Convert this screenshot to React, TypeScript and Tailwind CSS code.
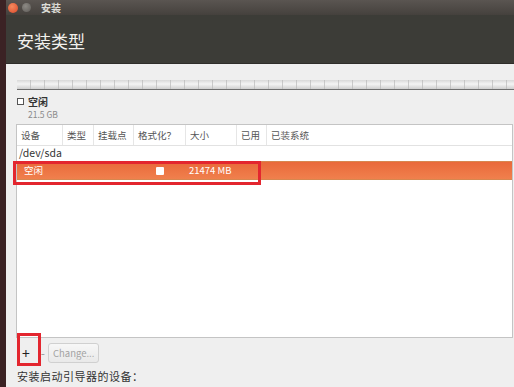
import React from 'react'

const font = { fontFamily: '"Noto Sans CJK SC", "Noto Sans", sans-serif' }

const columns = [
  { label: '设备', w: 'w-[46px]' },
  { label: '类型', w: 'w-[31px]' },
  { label: '挂载点', w: 'w-[40px]' },
  { label: '格式化？', w: 'w-[52px]' },
  { label: '大小', w: 'w-[51px]' },
  { label: '已用', w: 'w-[30px]' },
  { label: '已装系统', w: 'flex-1' },
]

const PartitionBar = () => (
  <div className="h-[10px] w-full border-b border-[#6f6f6f] bg-[linear-gradient(#d8d8d8,#f4f4f4_45%,#cfcfcf)]">
    <div className="h-full w-full bg-[repeating-linear-gradient(90deg,transparent_0px,transparent_13px,#b9b9b9_13px,#b9b9b9_14px)] opacity-70" />
  </div>
)

export default function App() {
  return (
    <div className="flex h-[387px] w-[514px] overflow-hidden bg-[#3e2426]" style={font}>
      <div className="w-[6px] shrink-0 bg-[#3b2224]" />
      <div className="flex min-w-0 flex-1 flex-col bg-[#efefef]">
        {/* title bar */}
        <div className="flex h-[15px] shrink-0 items-center bg-[linear-gradient(#5a5551,#45413d)]">
          <span className="ml-[2px] h-[10px] w-[10px] rounded-full bg-[radial-gradient(circle_at_40%_35%,#f58a5e,#d9482a)]" />
          <span className="ml-[4px] h-[9px] w-[9px] rounded-full bg-[radial-gradient(circle_at_40%_35%,#8d8a85,#5e5b57)]" />
          <span className="ml-[10px] text-[10px] font-bold leading-none text-[#dcdcd6]">安装</span>
        </div>
        {/* header */}
        <div className="flex h-[49px] shrink-0 items-center border-b border-[#2e2d2a] bg-[#3c3c37] pl-[11px] pt-[3px]">
          <span className="text-[17px] leading-none text-[#f2f1ee]">安装类型</span>
        </div>

        <div className="flex min-h-0 flex-1 flex-col pl-[11px]">
          <div className="pt-[16px]">
            <PartitionBar />
          </div>

          {/* legend */}
          <div className="mt-[6px] flex items-start gap-[4px]">
            <span className="mt-[2px] h-[7px] w-[7px] shrink-0 border border-[#555] bg-white" />
            <div className="flex flex-col gap-[1px]">
              <span className="block h-[12px] text-[10px] font-bold leading-[12px] text-[#333]">空闲</span>
              <span className="block h-[10px] text-[8.5px] leading-[10px] text-[#8a8a8a]">21.5 GB</span>
            </div>
          </div>

          {/* table */}
          <div className="relative mt-[5px] mr-[1px] -ml-[1px] flex h-[214px] flex-col border border-[#c4c4c4] bg-white">
            <div className="flex h-[21px] shrink-0 border-b border-[#e2e2e2]">
              {columns.map((c, i) => (
                <div
                  key={c.label}
                  className={`${c.w} flex items-center pl-[4px] text-[9.5px] text-[#555] ${i < columns.length - 1 ? 'border-r border-[#e6e6e6]' : ''}`}
                >
                  {c.label}
                </div>
              ))}
            </div>
            <div className="flex h-[15px] items-center pl-[2px] text-[10.5px] leading-none text-[#333]">/dev/sda</div>
            <div className="flex h-[19px] items-center border-y border-[#d7874f] bg-[linear-gradient(#e9693a,#f0804d)] text-[9.5px] text-white">
              <div className="w-[46px] pl-[7px]">空闲</div>
              <div className="w-[31px]" />
              <div className="w-[40px]" />
              <div className="flex w-[52px] items-center pl-[22px]">
                <span className="h-[8px] w-[8px] rounded-[1px] bg-white" />
              </div>
              <div className="w-[51px] pl-[3px]">21474 MB</div>
            </div>
            <div className="pointer-events-none absolute left-[-4px] top-[36px] h-[24px] w-[248px] border-[3px] border-[#e3262f]" />
          </div>

          {/* buttons */}
          <div className="relative mt-[5px] flex h-[20px] items-center">
            <span className="ml-[5px] text-[14px] leading-none text-[#222]">+</span>
            <span className="ml-[11px] text-[12px] leading-none text-[#9a9a9a]">-</span>
            <span className="ml-[3px] flex h-[20px] items-center rounded-[3px] border border-[#d0d0d0] bg-[linear-gradient(#f7f7f7,#e9e9e9)] px-[4px] text-[9.5px] text-[#a3a3a3]">
              Change...
            </span>
            <div className="pointer-events-none absolute left-0 top-[-10px] h-[33px] w-[24px] border-[3px] border-[#e3262f]" />
          </div>

          <div className="mt-[8px] text-[11px] leading-none tracking-[0.5px] text-[#333]">安装启动引导器的设备：</div>
        </div>
      </div>
    </div>
  )
}
